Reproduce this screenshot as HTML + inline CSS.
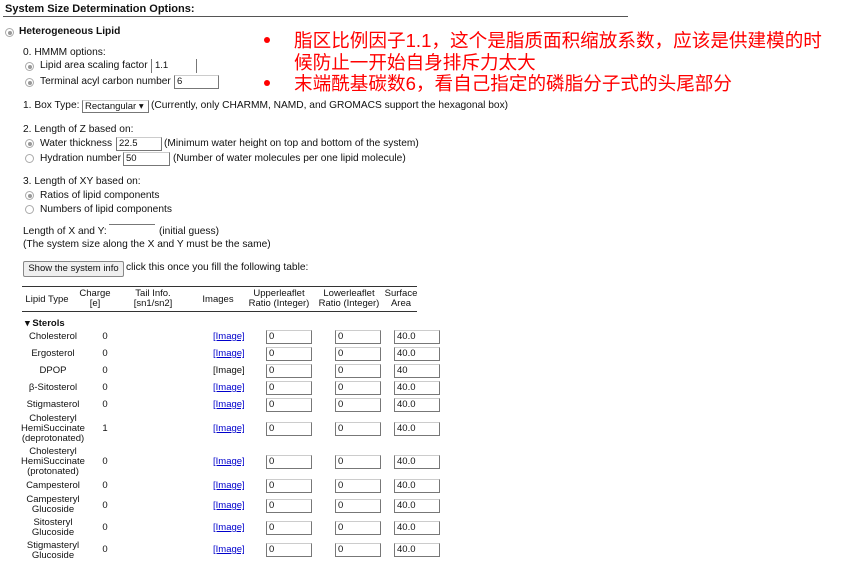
<!DOCTYPE html>
<html><head><meta charset="utf-8"><style>
body{margin:0;width:849px;height:564px;background:#fff;position:relative;overflow:hidden;font-family:"Liberation Sans",Arial,sans-serif;font-size:10.2px;color:#111}
.a{position:absolute;white-space:nowrap;line-height:12px}
.b{font-weight:bold}
.r{position:absolute;width:7px;height:7px;border:1px solid #aaa;border-radius:50%;background:#fff}
.r.on::after{content:"";position:absolute;left:1.5px;top:1.5px;width:4px;height:4px;border-radius:50%;background:#999}
.i{position:absolute;height:12px;border:1px solid #777;border-top-color:#ccc;box-sizing:content-box;font-size:9.5px;line-height:12px;padding-left:2px}
.c{position:absolute;text-align:center;line-height:10px;font-size:9.5px}
.lk{position:absolute;color:#00c;text-decoration:underline;font-size:9.5px;line-height:12px}
.z{position:absolute;color:#f00;font-family:"Liberation Sans","Noto Sans CJK SC",sans-serif;font-size:18.6px;line-height:22px;white-space:nowrap}
.dot{position:absolute;width:6px;height:6px;border-radius:50%;background:#f00}
</style></head><body>
<div class="a b" style="left:5px;top:3px;font-size:11px">System Size Determination Options:</div>
<div style="position:absolute;left:3px;top:16px;width:625px;height:1px;background:#555"></div>
<div class="r on" style="left:5px;top:28px"></div>
<div class="a b" style="left:19px;top:26px">Heterogeneous Lipid</div>
<div class="a" style="left:23px;top:47px">0. HMMM options:</div>
<div class="r on" style="left:25px;top:62px"></div>
<div class="a" style="left:40px;top:60px">Lipid area scaling factor</div>
<div style="position:absolute;left:151px;top:59px;width:1px;height:14px;background:#777"></div>
<div style="position:absolute;left:196px;top:59px;width:1px;height:14px;background:#777"></div>
<div class="a" style="left:155px;top:60px;font-size:9.5px">1.1</div>
<div class="r on" style="left:25px;top:78px"></div>
<div class="a" style="left:40px;top:76px">Terminal acyl carbon number</div>
<div class="i" style="left:174px;top:75px;width:41px">6</div>
<div class="a" style="left:23px;top:100px">1. Box Type:</div>
<div class="i" style="left:82px;top:100px;width:63px;height:11px;line-height:11px">Rectangular ▾</div>
<div class="a" style="left:151px;top:100px">(Currently, only CHARMM, NAMD, and GROMACS support the hexagonal box)</div>
<div class="a" style="left:23px;top:124px">2. Length of Z based on:</div>
<div class="r on" style="left:25px;top:139px"></div>
<div class="a" style="left:40px;top:138px">Water thickness</div>
<div class="i" style="left:116px;top:137px;width:42px">22.5</div>
<div class="a" style="left:164px;top:138px">(Minimum water height on top and bottom of the system)</div>
<div class="r" style="left:25px;top:154px"></div>
<div class="a" style="left:40px;top:153px">Hydration number</div>
<div class="i" style="left:123px;top:152px;width:43px">50</div>
<div class="a" style="left:173px;top:153px">(Number of water molecules per one lipid molecule)</div>
<div class="a" style="left:23px;top:176px">3. Length of XY based on:</div>
<div class="r on" style="left:25px;top:191px"></div>
<div class="a" style="left:40px;top:190px">Ratios of lipid components</div>
<div class="r" style="left:25px;top:205px"></div>
<div class="a" style="left:40px;top:204px">Numbers of lipid components</div>
<div class="a" style="left:23px;top:226px">Length of X and Y:</div>
<div style="position:absolute;left:109px;top:224px;width:46px;height:1px;background:#777"></div>
<div class="a" style="left:159px;top:226px">(initial guess)</div>
<div class="a" style="left:23px;top:239px">(The system size along the X and Y must be the same)</div>
<div style="position:absolute;left:23px;top:261px;width:99px;height:14px;border:1px solid #888;border-radius:2px;background:#efefef;font-size:9.5px;line-height:14px;text-align:center">Show the system info</div>
<div class="a" style="left:126px;top:262px">click this once you fill the following table:</div>
<div style="position:absolute;left:22px;top:286px;width:395px;height:1px;background:#333"></div>
<div style="position:absolute;left:22px;top:311px;width:395px;height:1px;background:#333"></div>
<div class="c" style="left:22px;top:295px;width:50px">Lipid Type</div>
<div class="c" style="left:75px;top:289px;width:40px">Charge<br>[e]</div>
<div class="c" style="left:125px;top:289px;width:56px">Tail Info.<br>[sn1/sn2]</div>
<div class="c" style="left:198px;top:295px;width:40px">Images</div>
<div class="c" style="left:246px;top:289px;width:66px">Upperleaflet<br>Ratio (Integer)</div>
<div class="c" style="left:316px;top:289px;width:66px">Lowerleaflet<br>Ratio (Integer)</div>
<div class="c" style="left:384px;top:289px;width:34px">Surface<br>Area</div>
<div class="a b" style="left:25px;top:318px;font-size:9.5px">▾ Sterols</div>

<div class="c" style="left:18px;top:332px;width:70px">Cholesterol</div>
<div class="c" style="left:95px;top:332px;width:20px">0</div>
<div class="lk" style="left:213px;top:331px">[Image]</div>
<div class="i" style="left:266px;top:330px;width:42px">0</div><div class="i" style="left:335px;top:330px;width:42px">0</div><div class="i" style="left:394px;top:330px;width:42px">40.0</div>

<div class="c" style="left:18px;top:349px;width:70px">Ergosterol</div>
<div class="c" style="left:95px;top:349px;width:20px">0</div>
<div class="lk" style="left:213px;top:348px">[Image]</div>
<div class="i" style="left:266px;top:347px;width:42px">0</div><div class="i" style="left:335px;top:347px;width:42px">0</div><div class="i" style="left:394px;top:347px;width:42px">40.0</div>

<div class="c" style="left:18px;top:366px;width:70px">DPOP</div>
<div class="c" style="left:95px;top:366px;width:20px">0</div>
<div class="a" style="left:213px;top:365px;font-size:9.5px">[Image]</div>
<div class="i" style="left:266px;top:364px;width:42px">0</div><div class="i" style="left:335px;top:364px;width:42px">0</div><div class="i" style="left:394px;top:364px;width:42px">40</div>

<div class="c" style="left:18px;top:383px;width:70px">β-Sitosterol</div>
<div class="c" style="left:95px;top:383px;width:20px">0</div>
<div class="lk" style="left:213px;top:382px">[Image]</div>
<div class="i" style="left:266px;top:381px;width:42px">0</div><div class="i" style="left:335px;top:381px;width:42px">0</div><div class="i" style="left:394px;top:381px;width:42px">40.0</div>

<div class="c" style="left:18px;top:400px;width:70px">Stigmasterol</div>
<div class="c" style="left:95px;top:400px;width:20px">0</div>
<div class="lk" style="left:213px;top:399px">[Image]</div>
<div class="i" style="left:266px;top:398px;width:42px">0</div><div class="i" style="left:335px;top:398px;width:42px">0</div><div class="i" style="left:394px;top:398px;width:42px">40.0</div>

<div class="c" style="left:18px;top:414px;width:70px">Cholesteryl<br>HemiSuccinate<br>(deprotonated)</div>
<div class="c" style="left:95px;top:424px;width:20px">1</div>
<div class="lk" style="left:213px;top:423px">[Image]</div>
<div class="i" style="left:266px;top:422px;width:42px">0</div><div class="i" style="left:335px;top:422px;width:42px">0</div><div class="i" style="left:394px;top:422px;width:42px">40.0</div>

<div class="c" style="left:18px;top:447px;width:70px">Cholesteryl<br>HemiSuccinate<br>(protonated)</div>
<div class="c" style="left:95px;top:457px;width:20px">0</div>
<div class="lk" style="left:213px;top:456px">[Image]</div>
<div class="i" style="left:266px;top:455px;width:42px">0</div><div class="i" style="left:335px;top:455px;width:42px">0</div><div class="i" style="left:394px;top:455px;width:42px">40.0</div>

<div class="c" style="left:18px;top:481px;width:70px">Campesterol</div>
<div class="c" style="left:95px;top:481px;width:20px">0</div>
<div class="lk" style="left:213px;top:480px">[Image]</div>
<div class="i" style="left:266px;top:479px;width:42px">0</div><div class="i" style="left:335px;top:479px;width:42px">0</div><div class="i" style="left:394px;top:479px;width:42px">40.0</div>

<div class="c" style="left:18px;top:495px;width:70px">Campesteryl<br>Glucoside</div>
<div class="c" style="left:95px;top:501px;width:20px">0</div>
<div class="lk" style="left:213px;top:500px">[Image]</div>
<div class="i" style="left:266px;top:499px;width:42px">0</div><div class="i" style="left:335px;top:499px;width:42px">0</div><div class="i" style="left:394px;top:499px;width:42px">40.0</div>

<div class="c" style="left:18px;top:518px;width:70px">Sitosteryl<br>Glucoside</div>
<div class="c" style="left:95px;top:523px;width:20px">0</div>
<div class="lk" style="left:213px;top:522px">[Image]</div>
<div class="i" style="left:266px;top:521px;width:42px">0</div><div class="i" style="left:335px;top:521px;width:42px">0</div><div class="i" style="left:394px;top:521px;width:42px">40.0</div>

<div class="c" style="left:18px;top:541px;width:70px">Stigmasteryl<br>Glucoside</div>
<div class="c" style="left:95px;top:545px;width:20px">0</div>
<div class="lk" style="left:213px;top:544px">[Image]</div>
<div class="i" style="left:266px;top:543px;width:42px">0</div><div class="i" style="left:335px;top:543px;width:42px">0</div><div class="i" style="left:394px;top:543px;width:42px">40.0</div>

<div class="dot" style="left:264px;top:37px"></div>
<div class="z" style="left:294px;top:30px">脂区比例因子1.1，这个是脂质面积缩放系数，应该是供建模的时</div>
<div class="z" style="left:294px;top:52px">候防止一开始自身排斥力太大</div>
<div class="dot" style="left:264px;top:80px"></div>
<div class="z" style="left:294px;top:73px">末端酰基碳数6，看自己指定的磷脂分子式的头尾部分</div>
</body></html>
